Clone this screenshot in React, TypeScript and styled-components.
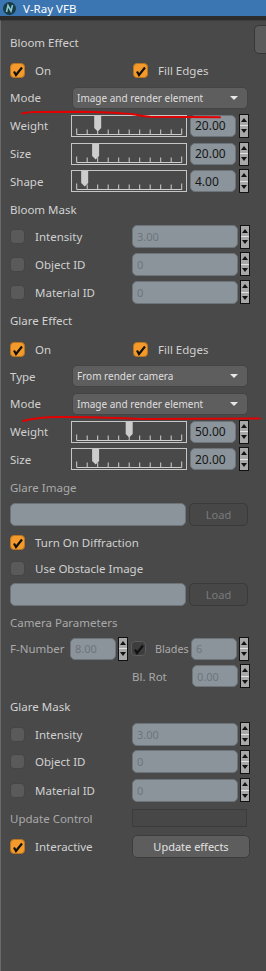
import React from "react";
import styled, { createGlobalStyle } from "styled-components";

const GlobalStyle = createGlobalStyle`
  html, body {
    margin: 0;
    padding: 0;
    background: #494949;
  }
  body {
    font-family: "Noto Sans", "Open Sans", sans-serif;
    font-size: 11.5px;
    color: #d0d0d0;
  }
`;

const Window = styled.div`
  position: relative;
  width: 266px;
  height: 971px;
  display: flex;
  flex-direction: column;
  overflow: hidden;
  background: #494949;
`;

const TitleBar = styled.div`
  height: 16px;
  background: #3b76b2;
  display: flex;
  align-items: center;
  gap: 7px;
  padding-left: 3px;
  color: #ffffff;
  font-size: 11.5px;
`;

const TitleGap = styled.div`
  height: 4px;
  background: #2c2c2c;
`;

const Body = styled.div`
  flex: 1;
  display: flex;
  border-left: 1px solid #6a6a6a;
  border-top: 1px solid #3d3d3d;
`;

const Main = styled.div`
  width: 243px;
  flex: none;
  padding: 7px 0 0 9px;
  display: flex;
  flex-direction: column;
`;

const Side = styled.div`
  flex: 1;
  padding-top: 4px;
  padding-left: 1px;
`;

const SideButton = styled.div`
  width: 20px;
  height: 29px;
  box-sizing: border-box;
  border-radius: 5px;
  background: #5b5b5b;
  border: 1px solid #363636;
`;

const Row = styled.div<{ $h: number; $pad?: number }>`
  height: ${(p) => p.$h}px;
  display: flex;
  align-items: center;
  padding-left: ${(p) => p.$pad ?? 0}px;
  flex: none;
`;

const Title = styled.div<{ $dim?: boolean }>`
  color: ${(p) => (p.$dim ? "#a9a9a9" : "#d2d2d2")};
  white-space: nowrap;
`;

const Label = styled.div<{ $w: number; $dim?: boolean; $small?: boolean }>`
  width: ${(p) => p.$w}px;
  flex: none;
  overflow: hidden;
  white-space: nowrap;
  font-size: ${(p) => (p.$small ? "10.8px" : "inherit")};
  color: ${(p) => (p.$dim ? "#a9a9a9" : "#d0d0d0")};
`;

const CheckItem = styled.div<{ $w: number }>`
  width: ${(p) => p.$w}px;
  flex: none;
  display: flex;
  align-items: center;
  gap: 10px;
  white-space: nowrap;
`;

const Box = styled.span<{ $on?: boolean; $dark?: boolean }>`
  width: 15px;
  height: 15px;
  box-sizing: border-box;
  border-radius: 4px;
  flex: none;
  display: flex;
  align-items: center;
  justify-content: center;
  background: ${(p) => (p.$on ? "#f39a2b" : p.$dark ? "#3d3d3d" : "#5a5a5a")};
  border: 1px solid ${(p) => (p.$on ? "#b9741f" : p.$dark ? "#5c5c5c" : "#454545")};
`;

const Combo = styled.div`
  width: 176px;
  height: 22px;
  box-sizing: border-box;
  border-radius: 5px;
  background: #5e5e5e;
  border: 1px solid #444444;
  display: flex;
  align-items: center;
  justify-content: space-between;
  padding: 0 9px 0 4px;
  font-size: 10px;
  color: #dedede;
`;

const ComboArrow = styled.span`
  border-left: 4px solid transparent;
  border-right: 4px solid transparent;
  border-top: 4px solid #e8e8e8;
`;

const Field = styled.div<{ $w: number; $h?: number; $off?: boolean }>`
  width: ${(p) => p.$w}px;
  height: ${(p) => p.$h ?? 22}px;
  box-sizing: border-box;
  flex: none;
  border-radius: 5px;
  background: #8b949b;
  border: 1px solid #6c747a;
  color: ${(p) => (p.$off ? "#6d757c" : "#161616")};
  padding-left: 4px;
  display: flex;
  align-items: center;
  font-size: ${(p) => (p.$off ? 11 : 12)}px;
`;

const Spinner = styled.div`
  width: 10px;
  height: 24px;
  box-sizing: border-box;
  flex: none;
  border: 1px solid #111111;
  background: #a8a8a8;
  display: flex;
  flex-direction: column;
`;

const SpinHalf = styled.div<{ $down?: boolean }>`
  flex: 1;
  display: flex;
  align-items: center;
  justify-content: center;
  border-top: ${(p) => (p.$down ? "1px solid #e2e2e2" : "none")};
  &::after {
    content: "";
    border-left: 3px solid transparent;
    border-right: 3px solid transparent;
    ${(p) =>
      p.$down ? "border-top: 4px solid #111;" : "border-bottom: 4px solid #111;"}
  }
`;

const SliderBox = styled.div`
  width: 116px;
  height: 22px;
  box-sizing: border-box;
  flex: none;
  border: 1px solid #c6c6c6;
`;

const LoadButton = styled.div`
  width: 59px;
  height: 23px;
  box-sizing: border-box;
  border-radius: 5px;
  background: #474747;
  border: 1px solid #3a3a3a;
  color: #7b7b7b;
  font-size: 11px;
  display: flex;
  align-items: center;
  justify-content: center;
`;

const UpdateBox = styled.div`
  width: 115px;
  height: 18px;
  box-sizing: border-box;
  background: #474747;
  border: 1px solid #3b3b3b;
`;

const ActionButton = styled.div`
  width: 118px;
  height: 23px;
  box-sizing: border-box;
  border-radius: 5px;
  background: #5d5d5d;
  border: 1px solid #3c3c3c;
  color: #e2e2e2;
  font-size: 11px;
  display: flex;
  align-items: center;
  justify-content: center;
`;

const Overlay = styled.svg`
  position: absolute;
  left: 0;
  top: 0;
  pointer-events: none;
`;

const Gap = styled.div<{ $w: number }>`
  width: ${(p) => p.$w}px;
  flex: none;
`;

const Tick = () => (
  <svg width="13" height="13" viewBox="0 0 13 13">
    <path d="M3 7.5 L5 11 L11 3.5" stroke="#111" strokeWidth="2.2" fill="none" />
    <path d="M4.2 10.2 L6 10.6" stroke="#111" strokeWidth="1.6" />
  </svg>
);

const Check = ({ on, dark }: { on?: boolean; dark?: boolean }) => (
  <Box $on={on} $dark={dark}>{(on || dark) && <Tick />}</Box>
);

const Spin = () => (
  <Spinner>
    <SpinHalf />
    <SpinHalf $down />
  </Spinner>
);

const Slider = ({ pos }: { pos: number }) => {
  const ticks = Array.from({ length: 11 }, (_, i) => 4.7 + i * 10.5);
  const cx = 4.7 + pos * 105;
  return (
    <SliderBox>
      <svg width="114" height="20" viewBox="0 0 114 20">
        <line x1="4.7" y1="18.5" x2="109.7" y2="18.5" stroke="#cfcfcf" strokeWidth="1" />
        {ticks.map((x, i) => (
          <line
            key={i}
            x1={x}
            x2={x}
            y1={i === 0 || i === 10 ? 12.5 : 13.5}
            y2="18.5"
            stroke="#cfcfcf"
            strokeWidth="1"
          />
        ))}
        <polygon
          points={`${cx - 3.5},0 ${cx + 3.5},0 ${cx + 3.5},12 ${cx},15.5 ${cx - 3.5},12`}
          fill="#cdcdcd"
        />
      </svg>
    </SliderBox>
  );
};

const SliderRow = ({ label, pos, value, h }: { label: string; pos: number; value: string; h: number }) => (
  <Row $h={h}>
    <Label $w={61}>{label}</Label>
    <Slider pos={pos} />
    <Gap $w={3} />
    <Field $w={46}>{value}</Field>
    <Gap $w={3} />
    <Spin />
  </Row>
);

const MaskRow = ({ label, value, h }: { label: string; value: string; h: number }) => (
  <Row $h={h}>
    <CheckItem $w={122}>
      <Check />
      {label}
    </CheckItem>
    <Field $w={106} $h={23} $off>{value}</Field>
    <Gap $w={2} />
    <Spin />
  </Row>
);

const ComboRow = ({ label, value, h }: { label: string; value: string; h: number }) => (
  <Row $h={h}>
    <Label $w={62}>{label}</Label>
    <Combo>
      {value}
      <ComboArrow />
    </Combo>
  </Row>
);

const EdgeRow = ({ h }: { h: number }) => (
  <Row $h={h}>
    <CheckItem $w={123}>
      <Check on />
      On
    </CheckItem>
    <CheckItem $w={110}>
      <Check on />
      Fill Edges
    </CheckItem>
  </Row>
);

const LogoIcon = () => (
  <svg width="13" height="13" viewBox="0 0 13 13">
    <circle cx="6.5" cy="6.5" r="6.5" fill="#173c46" />
    <path d="M3.5 10 L5 3.5 L8 9 L9.5 3" stroke="#8cc4cc" strokeWidth="1.6" fill="none" />
  </svg>
);

export default function App() {
  return (
    <Window>
      <GlobalStyle />
      <TitleBar>
        <LogoIcon />
        V-Ray VFB
      </TitleBar>
      <TitleGap />
      <Body>
        <Main>
          <Row $h={28}>
            <Title>Bloom Effect</Title>
          </Row>
          <EdgeRow h={28} />
          <ComboRow label="Mode" value="Image and render element" h={27} />
          <SliderRow label="Weight" pos={0.2} value="20.00" h={29} />
          <SliderRow label="Size" pos={0.18} value="20.00" h={27} />
          <SliderRow label="Shape" pos={0.076} value="4.00" h={28} />
          <Row $h={28}>
            <Title>Bloom Mask</Title>
          </Row>
          <MaskRow label="Intensity" value="3.00" h={27} />
          <MaskRow label="Object ID" value="0" h={28} />
          <MaskRow label="Material ID" value="0" h={28} />
          <Row $h={29}>
            <Title>Glare Effect</Title>
          </Row>
          <EdgeRow h={28} />
          <ComboRow label="Type" value="From render camera" h={26} />
          <ComboRow label="Mode" value="Image and render element" h={29} />
          <SliderRow label="Weight" pos={0.5} value="50.00" h={27} />
          <SliderRow label="Size" pos={0.18} value="20.00" h={28} />
          <Row $h={28}>
            <Title $dim>Glare Image</Title>
          </Row>
          <Row $h={27}>
            <Field $w={176} $h={23} $off />
            <Gap $w={3} />
            <LoadButton>Load</LoadButton>
          </Row>
          <Row $h={28}>
            <CheckItem $w={200}>
              <Check on />
              Turn On Diffraction
            </CheckItem>
          </Row>
          <Row $h={24}>
            <CheckItem $w={200}>
              <Check />
              Use Obstacle Image
            </CheckItem>
          </Row>
          <Row $h={28}>
            <Field $w={176} $h={23} $off />
            <Gap $w={3} />
            <LoadButton>Load</LoadButton>
          </Row>
          <Row $h={29}>
            <Title $dim>Camera Parameters</Title>
          </Row>
          <Row $h={23}>
            <Label $w={60} $dim>F-Number</Label>
            <Field $w={46} $off>8.00</Field>
            <Gap $w={2} />
            <Spin />
            <Gap $w={3} />
            <Check dark />
            <Gap $w={9} />
            <Label $w={36} $dim $small>Blades</Label>
            <Field $w={46} $off>6</Field>
            <Gap $w={2} />
            <Spin />
          </Row>
          <Row $h={32} $pad={122}>
            <Label $w={60} $dim>Bl. Rot</Label>
            <Field $w={46} $off>0.00</Field>
            <Gap $w={2} />
            <Spin />
          </Row>
          <Row $h={29}>
            <Title>Glare Mask</Title>
          </Row>
          <MaskRow label="Intensity" value="3.00" h={26} />
          <MaskRow label="Object ID" value="0" h={29} />
          <MaskRow label="Material ID" value="0" h={28} />
          <Row $h={28}>
            <Label $w={122} $dim>Update Control</Label>
            <UpdateBox />
          </Row>
          <Row $h={28}>
            <CheckItem $w={122}>
              <Check on />
              Interactive
            </CheckItem>
            <ActionButton>Update effects</ActionButton>
          </Row>
        </Main>
        <Side>
          <SideButton />
        </Side>
      </Body>
      <Overlay width="266" height="971" viewBox="0 0 266 971">
        <path
          d="M22 113.5 Q28 112 35 112 L83 111.7 Q120 112.5 135 114.5 Q142 116.5 150 116.8 L220 117.2"
          stroke="#e20000"
          strokeWidth="2"
          fill="none"
          strokeLinecap="round"
        />
        <path
          d="M23 421 Q38 417 60 417 L90 417.2 Q120 418 140 419 L260 418.6"
          stroke="#e20000"
          strokeWidth="2"
          fill="none"
          strokeLinecap="round"
        />
      </Overlay>
    </Window>
  );
}
